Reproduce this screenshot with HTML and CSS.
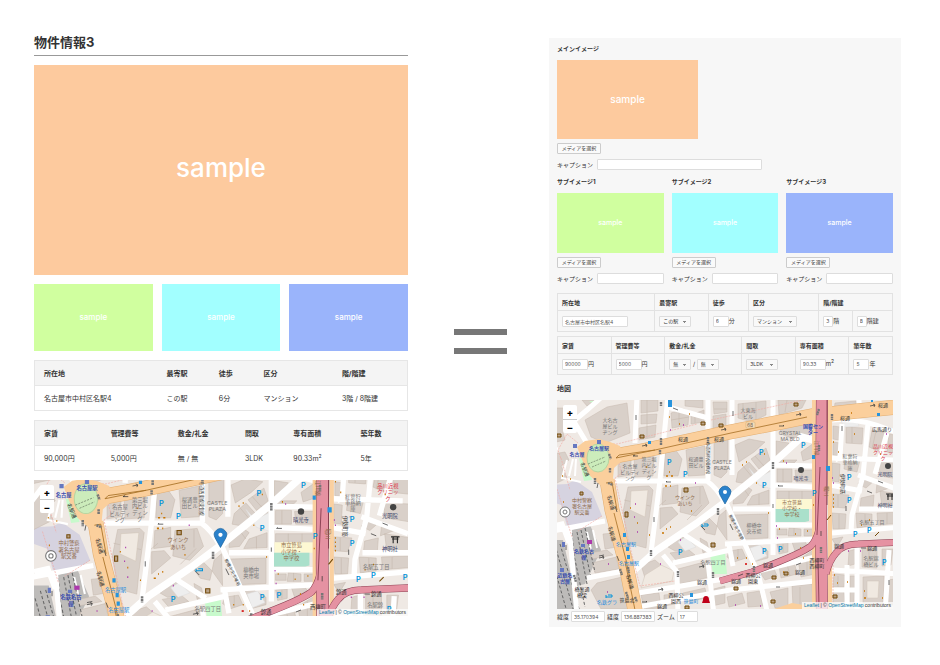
FILE: index.html
```html
<!DOCTYPE html>
<html lang="ja">
<head>
    <meta charset="UTF-8">
    <meta name="viewport" content="width=device-width, initial-scale=1.0">
    <title>物件情報3</title>
    <link rel="stylesheet" href="styles.css">
</head>
<body>
    <div class="compare">
        <main class="property">
            <h1>物件情報3</h1>
            <div class="photo photo-main">sample</div>
            <div class="photo-row">
                <div class="photo green">sample</div>
                <div class="photo cyan">sample</div>
                <div class="photo blue">sample</div>
            </div>
            <table class="spec spec-place">
                <tr><th>所在地</th><th>最寄駅</th><th>徒歩</th><th>区分</th><th>階/階建</th></tr>
                <tr><td>名古屋市中村区名駅4</td><td>この駅</td><td>6分</td><td>マンション</td><td>3階 / 8階建</td></tr>
            </table>
            <table class="spec spec-price">
                <tr><th>家賃</th><th>管理費等</th><th>敷金/礼金</th><th>間取</th><th>専有面積</th><th>築年数</th></tr>
                <tr><td>90,000円</td><td>5,000円</td><td>無 / 無</td><td>3LDK</td><td>90.33m<sup>2</sup></td><td>5年</td></tr>
            </table>
            <div class="map map-wide">
                <svg viewBox="-8 40 353 129" preserveAspectRatio="xMidYMid slice" role="img" aria-label="地図">
                    <use href="#city"/>
                    <text class="parking-sign" x="340" y="135">P</text>
                </svg>
                <div class="zoom"><button type="button">+</button><button type="button">−</button></div>
                <p class="credit"><a href="#">Leaflet</a> | © <a href="#">OpenStreetMap</a> contributors</p>
            </div>
        </main>

        <div class="equals" role="img" aria-label="イコール"><span></span><span></span></div>

        <form class="editor">
            <section class="media">
                <h2>メインイメージ</h2>
                <div class="photo photo-thumb">sample</div>
                <button class="pick" type="button">メディアを選択</button>
                <div class="caption caption-main"><label for="cap0">キャプション</label><input id="cap0" type="text"></div>
            </section>
            <div class="media-row">
                <section class="media">
                    <h2>サブイメージ1</h2>
                    <div class="photo green">sample</div>
                    <button class="pick" type="button">メディアを選択</button>
                    <div class="caption"><label for="cap1">キャプション</label><input id="cap1" type="text"></div>
                </section>
                <section class="media">
                    <h2>サブイメージ2</h2>
                    <div class="photo cyan">sample</div>
                    <button class="pick" type="button">メディアを選択</button>
                    <div class="caption"><label for="cap2">キャプション</label><input id="cap2" type="text"></div>
                </section>
                <section class="media">
                    <h2>サブイメージ3</h2>
                    <div class="photo blue">sample</div>
                    <button class="pick" type="button">メディアを選択</button>
                    <div class="caption"><label for="cap3">キャプション</label><input id="cap3" type="text"></div>
                </section>
            </div>
            <table class="fields fields-place">
                <colgroup><col class="w29"><col class="w16"><col class="w12"><col class="w21"><col class="w10"><col class="w12"></colgroup>
                <tr><th>所在地</th><th>最寄駅</th><th>徒歩</th><th>区分</th><th colspan="2">階/階建</th></tr>
                <tr>
                    <td><input class="address" type="text" value="名古屋市中村区名駅4" aria-label="所在地"></td>
                    <td><select class="mid" aria-label="最寄駅"><option>この駅</option></select></td>
                    <td><label><input class="short" type="text" value="6">分</label></td>
                    <td><select class="long" aria-label="区分"><option>マンション</option></select></td>
                    <td><label><input class="tiny" type="text" value="3">階</label></td>
                    <td><label><input class="tiny" type="text" value="8">階建</label></td>
                </tr>
            </table>
            <table class="fields fields-price">
                <colgroup><col class="w16"><col class="w16"><col class="w23"><col class="w16"><col class="w16"><col class="w13"></colgroup>
                <tr><th>家賃</th><th>管理費等</th><th>敷金/礼金</th><th>間取</th><th>専有面積</th><th>築年数</th></tr>
                <tr>
                    <td><label><input class="money" type="text" value="90000">円</label></td>
                    <td><label><input class="money" type="text" value="5000">円</label></td>
                    <td><select class="small" aria-label="敷金"><option>無</option></select> / <select class="small" aria-label="礼金"><option>無</option></select></td>
                    <td><select class="mid" aria-label="間取"><option>3LDK</option></select></td>
                    <td><label><input class="money" type="text" value="90.33">m<sup>2</sup></label></td>
                    <td><label><input class="short" type="text" value="5">年</label></td>
                </tr>
            </table>
            <h3>地図</h3>
            <div class="map map-tall">
                <svg viewBox="0 0 336 209" preserveAspectRatio="xMidYMid slice" role="img" aria-label="地図">
                    <!-- #city is reused by the wide map -->
                    <g id="city">
                        <rect class="land" x="-10" y="-5" width="370" height="220"/>
                        <path class="station" d="M-10 85L10 84L18 80L35 92L45 116L22 132L10 126L4 105L-10 100Z"/>
                        <path class="yard" d="M14 130L33 125L44 150L28 184L20 186Z M-10 140L6 140L22 210L-10 215Z"/>
                        <!-- buildings -->
                        <path class="building" d="M28 20L50 7L70 3L73 33L48 43L34 37Z M-10 8L8 8L8 15L14 24L6 32L8 40L-10 44Z M-10 55L8 52L12 60L4 66L10 78L-10 88Z M25 0L38 0L30 6Z
                            M84 0L101 0L101 11L84 13Z M84 15L100 14L99 23L84 24Z M82 28L99 25L98 37L82 40Z M114 13L127 9L132 12L131 25L115 28Z M134 15L147 10L147 22L134 24Z M128 0L146 0L146 8L128 6Z
                            M156 2L170 2L170 12L157 14Z M156 16L169 14L169 25L156 28Z M181 4L209 1L209 15L195 22L181 18Z M221 0L249 0L245 8L222 15Z
                            M61 62L74 59L74 75L61 77Z M77 56L97 52L96 76L78 77Z M108 51L118 49L125 59L121 76L107 76Z M129 50L148 46L148 75L131 76Z
                            M157 38L171 36L171 61L157 63Z M157 67L170 66L170 72L164 78L157 75Z
                            M71 87L92 86L96 90L91 127L89 148L71 143L66 112Z M106 88L121 85L121 103L105 105Z M125 88L146 86L152 103L139 116L123 112Z
                            M103 108L115 107L121 114L103 129Z M142 124L152 118L160 126L158 135L149 133Z M162 116L169 110L170 140L160 126Z
                            M111 147L125 136L136 145L130 150L118 151Z M113 153L132 150L138 155L119 160Z M143 138L150 142L152 150L146 153Z M121 169L151 161L153 177L122 184Z
                            M84 165L98 160L105 166L98 174L88 178Z M46 134L57 133L60 147L48 149Z M35 163L59 157L62 169L38 173Z M33 153L50 150L56 155L35 159Z M40 183L65 177L68 190L71 209L44 209L34 190Z
                            M84 195L102 193L104 208L87 209Z M107 195L118 194L118 204L107 206Z M126 193L148 188L150 198L128 202Z M153 190L168 186L168 203L155 206Z
                            M181 72L192 62L201 72L190 84L179 82Z M194 59L209 48L213 60L202 69Z M203 75L212 65L213 85L206 88Z M177 93L188 85L195 90L186 103L176 104Z M195 96L212 90L212 104L190 105Z
                            M178 45L192 39L208 42L197 52L182 62Z M219 41L232 43L226 51L219 56Z M222 24L249 16L257 22L256 32L244 38L234 38L224 34Z M244 52L257 43L258 57L246 61Z M220 60L240 60L237 63L220 63Z
                            M220 69L235 69L235 82L220 82Z M238 70L257 70L257 82L239 82Z M220 91L256 91L256 100L220 99Z M175 115L211 114L211 138L187 139Z
                            M220 129L230 129L230 135L220 135Z M232 128L244 129L244 136L231 136Z M247 129L257 129L256 136L247 136Z M220 144L231 143L231 152L222 154Z M235 142L247 140L250 145L238 151Z
                            M172 151L185 149L189 158L177 162L170 157Z M191 145L199 144L211 151L211 158L196 162Z M202 171L216 166L220 176L208 180Z M222 166L237 161L240 174L224 178Z M241 160L258 149L258 174L244 177Z M213 192L231 188L231 207L218 208Z M235 186L255 184L256 206L236 207Z M170 197L185 193L188 203L172 207Z M190 193L203 191L206 206L191 207Z
                            M278 3L299 1L300 8L277 10Z M311 5L347 0L347 9L312 13Z M276 26L283 27L282 40L276 39Z M289 27L306 28L305 44L289 43Z M315 30L329 33L324 52L312 47Z M332 34L349 37L349 54L330 52Z
                            M276 42L283 43L283 56L276 55Z M288 59L303 60L300 72L287 69Z M275 63L283 64L282 82L275 81Z M275 94L292 95L288 108L275 107Z M304 98L317 95L316 108L303 108Z M322 62L348 63L348 80L323 76Z M323 91L348 95L348 107L325 108Z M306 76L318 80L309 88L301 84Z M320 83L332 88L319 93Z
                            M275 113L289 114L288 129L276 129Z M299 113L315 114L315 126L300 128Z M320 113L346 112L346 123L321 125Z M275 139L286 137L280 147Z M292 151L299 149L298 164L291 166Z M305 149L320 147L320 168L305 167Z M325 149L336 149L334 165L325 166Z M306 177L327 176L326 204L306 203Z M277 174L288 175L287 187L276 187Z M276 192L287 192L288 205L276 205Z M293 176L298 176L297 206L293 206Z M330 180L347 178L347 205L331 205Z"/>
                        <path class="building-line" d="M90 0V38 M114 20L132 17 M122 11V26 M138 13V23 M157 9H170 M186 3V18 M199 2V20 M230 0L228 12 M186 66L196 78 M198 56L207 66 M186 88L192 96 M202 94V105 M226 69V82 M245 70V82 M232 91V99 M245 91V99 M237 128V136 M226 144V152 M181 149V160 M201 146V160 M230 164L233 176 M250 155V175 M295 27V43 M319 31L315 49 M281 95V107 M282 114V129 M308 114V127 M330 113V124 M281 176V187 M312 148V168 M67 100L93 106 M109 100L102 106 M130 120L145 105 M143 87L143 104 M243 187V206"/>
                        <path class="parking" d="M192 68L201 78L214 71L215 89L202 85Z M193 148L203 145L210 156L198 161Z M121 142L129 137L139 147L128 151Z M283 19L300 21L302 26L287 27Z"/>
                        <path class="courtyard" d="M74 91L91 90L88 117L73 110Z M88 175L104 165L117 171L115 181L84 188Z M310 181L322 181L321 198L310 198Z"/>
                        <path class="school-yard" d="M219 99H257V109H219Z"/>
                        <path class="school" d="M218 109H252V121L248 122H218Z"/>
                        <path class="park" d="M153 154L168 152L170 174L156 174Z M22 58L30 59L35 80L27 81Z M32 1L40 1L37 4Z"/>
                        <path class="stripe" d="M10 60L5 78L24 82 M16 59L12 76 M19 59L18 76 M30 132L34 150 M36 130L40 148"/>
                        <path class="rail" d="M20 132L30 184 M24 130L34 178 M28 128L38 172 M-2 145L17 212 M3 144L23 212 M-7 152L10 212 M15 133L17 155L28 207"/>
                        <!-- streets -->
                        <g class="street">
                            <path d="M18 20L30 10L47 -5 M16 20L31 45 M48 81H150Q160 88 168 103 M111 -5L103 80L94 153 M151 -5V80 M80 -5L78 43 M175 -5V75 M111 7L151 18 M216 -5V155 M216 65L258 66 M216 85L258 87 M176 109H216 M216 125H258 M168 144L260 139 M0 47L-10 60"/>
                            <path d="M168 100L201 173L211 215 M123 132L154 152 M116 163L173 150 M106 155L120 172L121 215 M81 193L173 178L258 157 M81 207L173 190L258 181 M-10 132L48 121 M30 178L72 170 M12 126L20 215 M12 143L5 124L-8 127"/>
                            <path d="M275 20Q306 17 345 35 M285 24L283 57L278 60 M311 23L306 76L295 115L294 132 M273 58L340 60 M301 75L345 91 M273 85L305 91 M330 33L318 74 M302 -5V14 M275 133L345 127 M275 170L345 174 M300 143V215 M290 165V215 M332 150L328 215 M275 190H300 M302 109L345 109 M172 145L176 166 M151 162L157 215"/>
                        </g>
                        <path class="street wide" d="M73 174L100 150L140 123L168 102L216 63L245 37L256 40"/>
                        <!-- main roads -->
                        <path class="pink-dash" d="M21 43L10 34L1 50L4 59 M29 43L60 44L140 24 M62 63L65 73L58 78L75 155L83 186L118 181 M154 20L246 0 M154 41L245 24 M273 20V55 M274 63V120 M257 27V110 M4 58L13 90 M45 116L21 131 M276 165V205 M0 89L15 137"/>
                        <path class="orange-edge" d="M52 57L80 52L173 32L255 16L300 11L350 6 M50 80L55 110L68 160L79 215"/>
                        <path class="orange" d="M52 57L80 52L173 32L255 16L300 11L350 6 M50 80L55 110L68 160L79 215"/>
                        <path class="orange-fill" d="M20 47L28 41L42 39L53 42L63 46L66 60L57 68L56 78L58 84L43 85L31 74L24 57Z M217 209L235 203L258 207V215H217Z"/>
                        <ellipse class="roundabout" cx="41" cy="58" rx="11" ry="14"/>
                        <path class="brown-line" d="M62 55L98 50L174 33L250 17 M62 55L59 58L98 50 M49 83L55 82L60 110 M57 113L69 160L74 183 M68 161L78 210"/>
                        <path class="orange-side" d="M257 -5V215 M273 -5V215"/>
                        <path class="pink-edge" d="M264 110Q264 135 254 146Q244 154 195 172L163 181 M269 174Q272 161 279 153Q286 144 301 144L350 142"/>
                        <path class="pink-edge core" d="M265 -5L264 120L265 215"/>
                        <path class="pink-road" d="M264 110Q264 135 254 146Q244 154 195 172L163 181 M269 174Q272 161 279 153Q286 144 301 144L350 142"/>
                        <path class="pink-road core" d="M265 -5L264 120L265 215"/>
                        <path class="dark-line" d="M263 67L260 135 M270 0V105 M261 158L262 207"/>
                        <path class="dark-dash" d="M31 64L48 57 M35 67L49 61"/>
                        <!-- traffic signals and one-way marks -->
                        <path class="signal" d="M104 38V45 M103 50V54 M151 37V43 M52 54L54 59 M53 68V73 M51 83L56 85 M38 78V84 M104 2V6 M94 150V156 M161 108V115 M63 169L65 175 M71 167L72 173 M69 192L71 198 M78 197L80 202 M216 62V69 M262 9L260 15 M275 14V20 M262 45V51 M264 147V153 M121 171V177 M156 172V178 M197 166V172 M17 175L19 182"/>
                        <g class="arrow">
                            <path id="arrow" d="M85 46L90 45L88 44M90 45L89 47"/>
                            <use href="#arrow" transform="translate(79 -16)"/>
                            <use href="#arrow" transform="translate(154 -31)"/>
                            <use href="#arrow" transform="translate(228 -40)"/>
                            <use href="#arrow" transform="translate(16 144)"/>
                            <use href="#arrow" transform="translate(57 121)"/>
                            <use href="#arrow" transform="translate(-43 112)"/>
                            <path d="M81 56H76L78 55 M114 82H109L110 81 M222 26H227L226 25 M116 8L121 10 M226 86H221L222 85 M310 91L315 93 M321 81L326 83 M85 202H90L89 201 M239 165L244 163 M176 11V16 M216 104V108 M79 15V20 M97 117V122 M58 106L60 112 M41 83L40 88 M60 156L62 161 M285 26V31 M289 106V111 M264 131V136 M332 180V185 M186 174L181 176 M304 148H309 M223 187H219 M144 126L148 130 M173 124L176 130 M9 145V150 M42 156L47 155"/>
                        </g>
                        <!-- points of interest -->
                        <g class="dots">
                            <path d="M112 17H113 M132 14H133 M122 24H123 M89 67H90 M109 76H111 M114 76H116 M112 72H113 M108 86H110 M113 86H114 M92 135H93 M105 133H107 M109 129H110 M113 127H114 M73 108H74 M80 123H81 M134 111H135 M185 65H186 M189 62H190 M207 54H208 M199 83H200 M211 113H212 M276 95H277 M276 99H277 M276 103H277 M276 107H277 M276 42H277 M281 52H282 M290 75H291 M323 54H324 M304 125H305 M312 120H313 M222 129H223 M238 134H239 M250 131H251 M189 158H190 M195 164H196 M246 158H247 M226 172H227 M277 175H278 M280 183H281 M290 182H291 M307 191H308 M307 198H309 M325 198H326 M5 76H6 M13 79H14 M6 102H7 M243 148H244 M180 158H181 M294 13H295 M297 34H298 M256 105H257 M226 61H227"/>
                            <path class="purple" d="M113 30H114 M126 25H127 M138 83H139 M78 104H79 M77 117H78 M80 132H81 M123 140H124 M51 164H52 M50 192H51 M103 164H104 M219 126H220 M220 138H221 M229 63H230 M275 78H276 M276 83H277 M329 34H330 M178 205H179 M303 151H304 M291 151H292 M203 206H204"/>
                            <path class="red" d="M188 164H190"/>
                        </g>
                        <g class="poi">
                            <path d="M83 35H87V38H83Z M144 22H148V25H144Z M162 24H166V27H162Z M68 112H71V117H68Z M127 88H131V92H127Z M154 143H158V147H154Z M237 3H241V6H237Z M0 34H4V37H0Z M23 92H26V95H23Z M215 176H219V179H215Z M227 172H231V175H227Z M177 187H181V190H177Z M128 206H132V209H128Z M276 195H280V198H276Z M214 200H218V203H214Z M270 120L274 115 M318 136L322 132"/>
                        </g>
                        <g class="blue-icon">
                            <path d="M16 44H20V48H16Z M40 40H44V44H40Z M5 142H8V147H5Z M24 144H28V147H24Z M3 168H7V172H3Z M252 27H255V30H252Z"/>
                            <path class="cyan-icon" d="M91 41H94V44H91Z M66 133H69V137H66Z M69 147H72V151H69Z M70 155H73V159H70Z M255 55H258V59H255Z M269 66H273V71H269Z M320 13H323V16H320Z M133 193H136V197H133Z M111 0H115V7H111Z M314 0H316V2H314Z"/>
                            <path class="wheel" d="M30 140H35V144H30Z"/>
                        </g>
                        <g class="temple"><circle cx="244" cy="70" r="3"/><circle cx="331" cy="66" r="3"/></g>
                        <path class="torii" d="M329 94H337 M330 96H336 M331 94V100 M335 94V100"/>
                        <g class="interchange"><circle cx="8" cy="112" r="5"/><circle cx="8" cy="112" r="2"/></g>
                        <path class="bed" d="M145 124V127M145 126H151V124H147 M49 195V198M49 197H55V195H51"/>
                        <path class="hospital" d="M146 200Q146 196 149 196Q152 196 152 200L153 203H145Z"/>
                        <g class="parking-sign">
                            <text x="110" y="65">P</text><text x="126" y="77">P</text><text x="121" y="155">P</text><text x="202" y="55">P</text><text x="205" y="88">P</text><text x="244" y="48">P</text><text x="255" y="96">P</text><text x="290" y="80">P</text><text x="290" y="103">P</text><text x="296" y="137">P</text><text x="310" y="133">P</text><text x="205" y="154">P</text><text x="221" y="152">P</text><text x="325" y="165">P</text>
                        </g>
                        <g class="label">
                            <text x="73" y="68">名古屋</text><text x="73" y="74">ビルディ</text><text x="73" y="80">ング</text>
                            <text x="92" y="61">第三堀</text><text x="92" y="67">内ビル</text><text x="92" y="73">ディン</text><text x="92" y="79">グ</text>
                            <text x="139" y="61">桜通豊</text><text x="139" y="67">田ビル</text>
                            <text x="165" y="64">CASTLE</text><text x="165" y="70">PLAZA</text>
                            <text x="293" y="58">紅葉狩</text><text x="293" y="64">車格納</text><text x="293" y="70">庫</text>
                            <text x="197" y="127">柳橋中</text><text x="197" y="133">央市場</text>
                            <text x="156" y="164">名駅四丁目</text><text x="315" y="124">名駅五丁目</text>
                            <text x="314" y="160">名駅錦</text>
                            <text class="school-name" x="235" y="104">市立笹島</text><text class="school-name" x="235" y="110">小学校・</text><text class="school-name" x="235" y="116">中学校</text>
                            <text class="brown-text" x="25" y="102">中村警察</text><text class="brown-text" x="25" y="108">署名古屋</text><text class="brown-text" x="25" y="114">駅交番</text>
                            <text class="brown-text" x="128" y="99">ウインク</text><text class="brown-text" x="128" y="105">あいち</text>
                            <text class="road-text" x="282" y="148">錦通</text><text class="road-text" x="315" y="150">錦通</text><text class="road-text" x="211" y="167">錦通</text>
                            <text class="road-text" x="260" y="162">西柳町</text>
                            <text class="road-text" transform="translate(26 70) rotate(68)">名駅通</text><text class="road-text" transform="translate(52 103) rotate(75)">名駅通</text><text class="road-text" transform="translate(53 134) rotate(75)">名駅通</text>
                            <text class="road-text narrow" transform="translate(149 58) rotate(90)">市道西柳線東側線</text><text class="road-text" transform="translate(284 84) rotate(90)">伊勢町筋</text><text class="road-text narrow" transform="translate(178 128) rotate(64)">柳橋中央市場筋</text>
                            <text class="brown-text" transform="translate(258 48) rotate(90)">江川線</text><text class="brown-text" transform="translate(268 91) rotate(90)">堀川</text>
                            <text class="metro" x="42" y="50">名古屋駅</text><text class="metro" x="20" y="56">名古屋</text><text class="metro" x="27" y="153">名鉄名古</text><text class="metro" x="27" y="159">屋</text>
                            <text class="cyan-text" x="69" y="146">名古屋駅</text><text class="cyan-text" x="72" y="165">名古屋駅</text>
                            <text class="clinic" x="326" y="48">品川近視</text><text class="clinic" x="326" y="54">クリニッ</text><text class="clinic" x="326" y="60">ク</text>
                            <text class="shrine" x="244" y="80">晴光寺</text><text class="shrine" x="328" y="76">光明院</text><text class="shrine" x="328" y="107">神明社</text>
                        </g>
                        <!-- marker -->
                        <path class="pin" d="M168 104L163 95Q161 91 163 89Q165 86 168 86Q171 86 173 89Q175 91 173 95Z"/>
                        <circle class="pin-hole" cx="168" cy="92" r="2"/>
                    </g>
                    <!-- names that only the taller map reaches -->
                    <g class="label">
                        <text x="53" y="22">大名古</text><text x="53" y="28">屋ビル</text><text x="53" y="34">ヂング</text>
                        <text x="191" y="12">大東海</text><text x="191" y="18">ビル</text>
                        <text x="233" y="35">CRYSTAL</text><text x="233" y="41">MA BLD</text>
                        <text x="314" y="166">橋ビル</text>
                        <text class="road-text" x="126" y="41">桜通</text><text class="road-text" x="162" y="41">桜通</text><text class="road-text" x="288" y="20">桜通</text><text class="road-text" x="326" y="7">桜通</text><text class="road-text" x="325" y="31">広馬通り</text>
                        <text class="road-text" x="179" y="183">錦通</text><text class="road-text" x="145" y="184">錦通</text><text class="road-text" x="105" y="208">錦通</text><text class="road-text" x="243" y="174">錦通</text>
                        <text class="road-text" x="260" y="168">西柳町</text><text class="road-text" x="196" y="177">西柳公</text><text class="road-text" x="196" y="183">園東</text><text class="road-text" x="119" y="197">西柳公</text><text class="road-text" x="119" y="203">園西</text><text class="road-text" x="70" y="202">笹島北</text><text class="road-text" x="25" y="191">橋裏通</text><text class="road-text" x="25" y="197">橋梁</text>
                        <text class="road-text" transform="translate(71 182) rotate(75)">名駅通</text>
                        <text class="metro" x="8" y="177">近鉄名</text><text class="metro" x="8" y="183">古屋</text><text class="metro" x="256" y="28">国際セン</text><text class="metro" x="256" y="34">ター</text>
                        <text class="cyan-text" x="134" y="203">笹島町</text><text class="cyan-text" x="50" y="204">名鉄グラ</text>
                    </g>
                    <rect class="shield" x="189" y="22" width="9" height="6" rx="1"/><text class="shield-text" x="193" y="27">68</text>
                </svg>
                <div class="zoom"><button type="button">+</button><button type="button">−</button></div>
                <p class="credit"><a href="#">Leaflet</a> | © <a href="#">OpenStreetMap</a> contributors</p>
            </div>
            <div class="position">
                <label for="lat">緯度</label><input id="lat" type="text" value="35.170394">
                <label for="lng">経度</label><input id="lng" type="text" value="136.887383">
                <label for="zoom">ズーム</label><input id="zoom" class="zoom-level" type="text" value="17">
            </div>
        </form>
    </div>
</body>
</html>
```
FILE: styles.css
```css
* {
    box-sizing: border-box;
}
body {
    margin: 0;
    background-color: #fff;
    color: #333;
    font-family: Inter, "Noto Sans CJK JP", sans-serif;
    font-size: 7px;
}
h1, h2, h3, p {
    margin: 0;
}
.compare {
    display: grid;
    grid-template-columns: minmax(0, 374fr) minmax(0, 141fr) minmax(0, 352fr);
    align-items: start;
    padding: 32px 39px 32px 34px;
}

/* public page */
.property h1 {
    margin-bottom: 9px;
    border-bottom: 1px solid #999;
    padding-bottom: 3px;
    font-size: 13px;
    line-height: 20px;
}
.photo {
    display: flex;
    align-items: center;
    justify-content: center;
    aspect-ratio: 16 / 9;
    padding-bottom: 2px;
    background-color: #fdca9e;
    color: #fff;
    font-size: 8px;
    font-weight: 500;
}
.photo-main {
    padding-bottom: 6px;
    font-size: 26px;
}
.green {
    background-color: #d0ff9f;
}
.cyan {
    background-color: #a2ffff;
}
.blue {
    background-color: #9ab4fb;
}
.photo-row {
    display: grid;
    grid-template-columns: repeat(3, 1fr);
    gap: 9px;
    margin: 9px 0;
}
table {
    width: 100%;
    border-collapse: collapse;
    table-layout: fixed;
}
th, td {
    text-align: left;
    white-space: nowrap;
}
sup {
    font-size: 5px;
    line-height: 1px;
}
.spec {
    margin-bottom: 9px;
    border: 1px solid #e6e6e6;
}
.spec th, .spec td {
    height: 25px;
    padding: 0 0 0 9px;
    font-size: 7px;
}
.spec th {
    border-bottom: 1px solid #e6e6e6;
    background-color: #f4f4f4;
}
.spec-place th:nth-child(1) {
    width: 33%;
}
.spec-place th:nth-child(2) {
    width: 14%;
}
.spec-place th:nth-child(3) {
    width: 12%;
}
.spec-place th:nth-child(4) {
    width: 21%;
}
.spec-price th:nth-child(-n+3) {
    width: 18%;
}
.spec-price th:nth-child(4) {
    width: 13%;
}
.spec-price th:nth-child(5) {
    width: 18%;
}

.equals {
    display: grid;
    justify-content: center;
    gap: 13px;
    margin-top: 297px;
    padding-left: 4px;
}
.equals span {
    width: 53px;
    height: 6px;
    background-color: #777;
}

/* edit screen */
.editor {
    margin-top: 6px;
    padding: 4px 8px 5px 8px;
    background-color: #f7f7f7;
}
.editor h2 {
    margin-bottom: 5px;
    font-size: 6px;
    line-height: 13px;
}
.editor h3 {
    margin: 7px 0 5px;
    font-size: 7px;
    line-height: 13px;
}
.photo-thumb {
    width: 42%;
    font-size: 10px;
}
.media-row .photo {
    font-size: 7px;
}
.media-row {
    display: grid;
    grid-template-columns: repeat(3, minmax(0, 1fr));
    gap: 8px;
    margin: 5px 0 9px;
}
.pick {
    display: block;
    width: 44px;
    height: 11px;
    margin: 4px 0 5px;
    border: 1px solid #ccc;
    border-radius: 1px;
    padding: 0;
    background-color: #fafafa;
    color: #333;
    font-family: inherit;
    font-size: 5px;
    line-height: 9px;
}
input, select {
    height: 11px;
    border: 1px solid #ddd;
    border-radius: 1px;
    padding: 0 2px;
    background-color: #fff;
    color: #555;
    font-family: inherit;
    font-size: 5px;
    line-height: 9px;
    vertical-align: middle;
}
select {
    padding: 0 3px;
    appearance: none;
    background-color: #f9f9f9;
    background-image: linear-gradient(#888, #888), linear-gradient(#888, #888);
    background-position: right 4px top 4px, right 5px top 5px;
    background-repeat: no-repeat;
    background-size: 3px 1px, 1px 1px;
    color: #333;
}
.caption {
    display: flex;
    align-items: center;
    gap: 4px;
    font-size: 6px;
    line-height: 11px;
    white-space: nowrap;
}
.caption input {
    flex: 1;
    min-width: 0;
}
.caption-main {
    width: 61%;
}
.fields {
    margin-bottom: 4px;
    border: 1px solid #e2e2e2;
}
.fields th, .fields td {
    border: 1px solid #e2e2e2;
    padding: 0 0 0 4px;
    font-size: 6px;
}
.fields th {
    height: 17px;
}
.fields td {
    height: 21px;
}
.w10 {
    width: 10%;
}
.w12 {
    width: 12%;
}
.w13 {
    width: 13%;
}
.w16 {
    width: 16%;
}
.w21 {
    width: 21%;
}
.w23 {
    width: 23%;
}
.w29 {
    width: 29%;
}
.address {
    width: 66px;
}
.money {
    width: 26px;
}
.short {
    width: 16px;
}
.tiny {
    width: 10px;
}
.small {
    width: 22px;
}
.mid {
    width: 32px;
}
.long {
    width: 44px;
}
.position {
    display: flex;
    align-items: center;
    gap: 2px;
    margin-top: 2px;
    font-size: 6px;
}
.position input {
    width: 34px;
}
.position .zoom-level {
    width: 21px;
}

/* map */
.map {
    position: relative;
    overflow: hidden;
}
.map-wide {
    aspect-ratio: 374 / 136;
}
.map-tall {
    aspect-ratio: 336 / 209;
}
.map svg {
    display: block;
    width: 100%;
    height: 100%;
}
.zoom {
    position: absolute;
    top: 5px;
    left: 6px;
    display: grid;
    border-radius: 2px;
    background-color: #fff;
}
.zoom button {
    width: 14px;
    height: 14px;
    border: 0;
    padding: 0;
    background: none;
    color: #000;
    font-family: inherit;
    font-size: 10px;
    font-weight: bold;
    line-height: 14px;
}
.zoom button + button {
    border-top: 1px solid #ccc;
}
.credit {
    position: absolute;
    right: 0;
    bottom: 0;
    padding: 0 2px;
    background-color: rgba(255, 255, 255, 0.7);
    font-family: "Liberation Sans", Arial, sans-serif;
    font-size: 5px;
    line-height: 7px;
}
.credit a {
    color: #0078a8;
    text-decoration: none;
}
.land {
    fill: #efe9e4;
}
.station {
    fill: #d6d3e0;
}
.yard {
    fill: #bdbbb9;
}
.building {
    fill: #d9d0c9;
    stroke: #c6b9ae;
    stroke-width: 0.5;
}
.building-line {
    fill: none;
    stroke: #c2b5a9;
    stroke-width: 0.5;
}
.parking {
    fill: #eeeeee;
    stroke: #dcdcdc;
    stroke-width: 0.5;
}
.courtyard {
    fill: #f0e9e1;
    stroke: #d1c5b9;
    stroke-width: 0.5;
}
.school-yard {
    fill: #fdf8d3;
}
.school {
    fill: #aae0cb;
}
.park {
    fill: #c8facc;
}
.street, .orange, .orange-edge, .brown-line, .pink-dash, .pink-edge, .pink-road, .orange-side, .dark-line, .dark-dash, .signal, .arrow, .rail, .stripe, .bed, .torii {
    fill: none;
}
.street {
    stroke: #fff;
    stroke-width: 5;
}
.wide {
    stroke-width: 7;
}
.rail {
    stroke: #666;
    stroke-width: 1;
    stroke-dasharray: 3 2;
}
.stripe {
    stroke: #fff;
    stroke-width: 2;
}
.pink-dash {
    stroke: #f2a7a0;
    stroke-width: 0.6;
    stroke-dasharray: 2 1;
}
.orange-edge {
    stroke: #e2ae72;
    stroke-width: 15;
}
.orange {
    stroke: #fbcf9c;
    stroke-width: 14;
}
.orange-fill {
    fill: #fbcf9c;
}
.roundabout {
    fill: #ccecbb;
    stroke: #b8d5a0;
}
.brown-line {
    stroke: #a66f24;
    stroke-width: 0.8;
}
.orange-side {
    stroke: #fad0a0;
    stroke-width: 4;
}
.pink-edge {
    stroke: #8d4355;
    stroke-width: 7;
}
.pink-road {
    stroke: #e592a2;
    stroke-width: 6;
}
.pink-edge.core {
    stroke-width: 12;
}
.pink-road.core {
    stroke-width: 11;
}
.dark-line {
    stroke: #7d3547;
    stroke-width: 0.8;
}
.dark-dash {
    stroke: #5d6b58;
    stroke-width: 0.6;
    stroke-dasharray: 2 1;
}
.signal {
    stroke: #777;
    stroke-width: 2.4;
    stroke-dasharray: 2 0.5;
}
.arrow {
    stroke: #333;
    stroke-width: 0.7;
}
.dots {
    fill: none;
    stroke: #c77400;
    stroke-width: 1.5;
}
.purple {
    stroke: #ac39ac;
}
.red {
    stroke: #d40000;
}
.poi {
    fill: #b9a187;
    stroke: #734a08;
}
.blue-icon {
    fill: #6678c0;
}
.cyan-icon {
    fill: #2794dd;
}
.wheel {
    fill: #ac39ac;
}
.temple {
    fill: #444;
}
.torii {
    stroke: #222;
}
.interchange {
    fill: #fff;
    stroke: #777;
}
.bed {
    stroke: #0092da;
}
.hospital {
    fill: #c00018;
}
.parking-sign {
    fill: #0092da;
    font-size: 7px;
    font-weight: 600;
}
.label {
    fill: #777;
    font-size: 5px;
    text-anchor: middle;
}
.road-text {
    fill: #333;
}
.narrow {
    font-size: 4px;
}
.brown-text, .school-name {
    fill: #8f6b4c;
}
.metro {
    fill: #3c4fb0;
    font-weight: 600;
}
.cyan-text {
    fill: #1d8ce0;
}
.clinic {
    fill: #da3045;
}
.shrine {
    fill: #333a66;
}
.shield {
    fill: #f7dfba;
    stroke: #c9a36a;
    stroke-width: 0.5;
}
.shield-text {
    fill: #776655;
    font-size: 5px;
    text-anchor: middle;
}
.pin {
    fill: #2a81cb;
    stroke: #1d659f;
    stroke-width: 0.7;
}
.pin-hole {
    fill: #fff;
}
```
